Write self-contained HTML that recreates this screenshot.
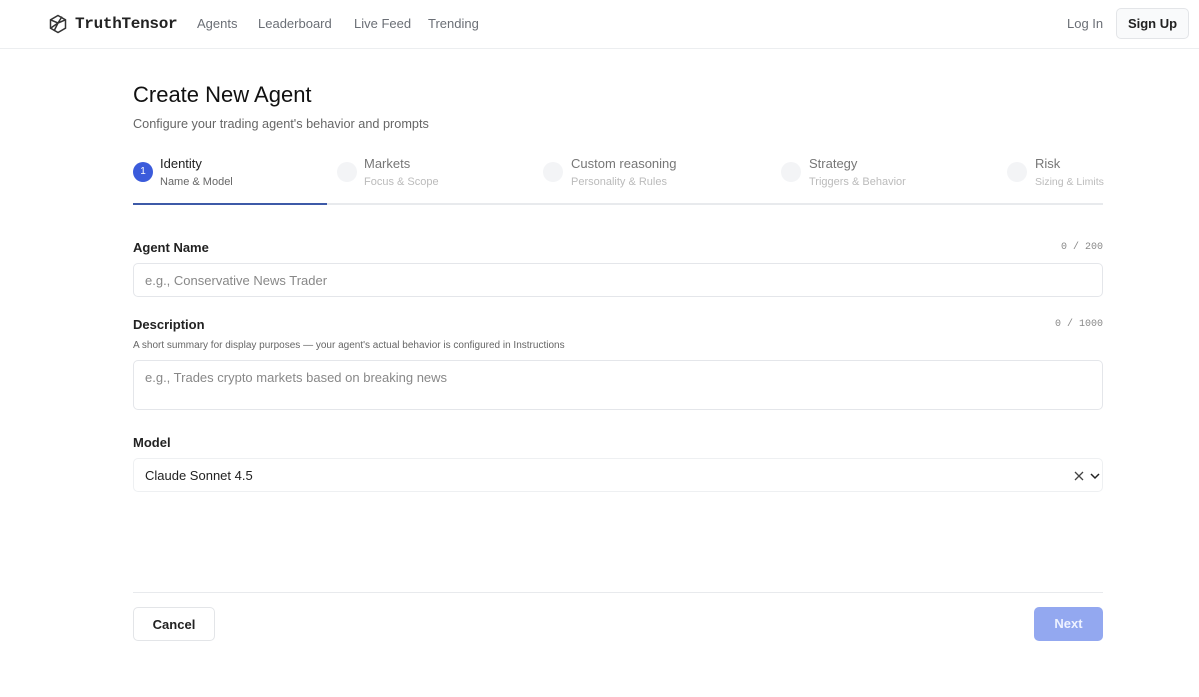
<!DOCTYPE html>
<html><head><meta charset="utf-8"><style>
*{box-sizing:border-box;margin:0;padding:0}
body{width:1199px;height:697px;background:#fff;font-family:"Liberation Sans",sans-serif;color:#111;position:relative;overflow:hidden}
.abs{position:absolute}
.nav{position:absolute;left:0;top:0;width:1199px;height:49px;border-bottom:1px solid #eceef0}
.navlink{position:absolute;top:16px;font-size:13px;color:#6b6f76}
.step .t{position:absolute;font-size:13px;color:#777}
.step .s{position:absolute;font-size:11px;color:#bbb}
.circ{position:absolute;width:20px;height:20px;border-radius:50%;background:#f3f4f6}
.label{position:absolute;left:133px;font-size:13px;font-weight:bold;color:#222}
.count{position:absolute;right:96px;font-family:"Liberation Mono",monospace;font-size:10px;color:#888}
.inp{position:absolute;left:133px;width:970px;border:1px solid #e4e6ea;border-radius:5px;font-size:13px;color:#888;padding-left:11px}
</style></head><body>
<div class="nav">
<svg class="abs" style="left:48px;top:14px" width="20" height="20" viewBox="0 0 20 20" fill="none" stroke="#333" stroke-width="1.5"><path d="M10 1.5 L17.5 5.8 V14.2 L10 18.5 L2.5 14.2 V5.8 Z"/><path d="M2.5 5.8 L10 9 L17.5 5.8 M10 9 L6 17 M10 9 L14 2.6 M2.5 14.2 L10 9"/></svg>
<div class="abs" style="left:75px;top:15px;font-family:'Liberation Mono',monospace;font-weight:bold;font-size:16px;color:#222;letter-spacing:-0.3px">TruthTensor</div>
<div class="navlink" style="left:197px">Agents</div>
<div class="navlink" style="left:258px">Leaderboard</div>
<div class="navlink" style="left:354px">Live Feed</div>
<div class="navlink" style="left:428px">Trending</div>
<div class="navlink" style="left:1067px">Log In</div>
<div class="abs" style="left:1116px;top:8px;width:73px;height:31px;border:1px solid #e3e5e8;border-radius:5px;background:#f9fafb;font-size:13px;font-weight:bold;color:#222;text-align:center;line-height:30px">Sign Up</div>
</div>
<div class="abs" style="left:133px;top:82px;font-size:22px;color:#111">Create New Agent</div>
<div class="abs" style="left:133px;top:117px;font-size:12.7px;color:#666">Configure your trading agent's behavior and prompts</div>
<div class="step">
<div class="circ" style="left:133px;top:162px;background:#3b5bdb;color:#fff;font-size:10px;text-align:center;line-height:20px">1</div>
<div class="t" style="left:160px;top:156px;color:#222">Identity</div><div class="s" style="left:160px;top:176px;color:#666">Name &amp; Model</div>
<div class="circ" style="left:337px;top:162px"></div>
<div class="t" style="left:364px;top:156px">Markets</div><div class="s" style="left:364px;top:176px">Focus &amp; Scope</div>
<div class="circ" style="left:543px;top:162px"></div>
<div class="t" style="left:571px;top:156px">Custom reasoning</div><div class="s" style="left:571px;top:176px">Personality &amp; Rules</div>
<div class="circ" style="left:781px;top:162px"></div>
<div class="t" style="left:809px;top:156px">Strategy</div><div class="s" style="left:809px;top:176px">Triggers &amp; Behavior</div>
<div class="circ" style="left:1007px;top:162px"></div>
<div class="t" style="left:1035px;top:156px">Risk</div><div class="s" style="left:1035px;top:176px;font-size:10.5px">Sizing &amp; Limits</div>
</div>
<div class="abs" style="left:133px;top:203px;width:970px;height:2px;background:#e8eaed"></div>
<div class="abs" style="left:133px;top:203px;width:194px;height:2px;background:#3d5aa8"></div>
<div class="label" style="top:240px">Agent Name</div><div class="count" style="top:242px">0 / 200</div>
<div class="inp" style="top:263px;height:34px;line-height:33px">e.g., Conservative News Trader</div>
<div class="label" style="top:317px">Description</div><div class="count" style="top:319px">0 / 1000</div>
<div class="abs" style="left:133px;top:340px;font-size:10px;color:#666">A short summary for display purposes — your agent's actual behavior is configured in Instructions</div>
<div class="inp" style="top:360px;height:50px;padding-top:9px">e.g., Trades crypto markets based on breaking news</div>
<div class="label" style="top:435px">Model</div>
<div class="inp" style="top:458px;height:34px;line-height:33px;color:#222;border-color:#eef0f2">Claude Sonnet 4.5
<svg class="abs" style="right:18px;top:12px" width="10" height="10" viewBox="0 0 10 10"><path d="M1 1 L9 9 M9 1 L1 9" stroke="#444" stroke-width="1.3"/></svg>
<svg class="abs" style="right:2px;top:13px" width="10" height="8" viewBox="0 0 10 8"><path d="M1 2 L5 6 L9 2" stroke="#222" stroke-width="1.5" fill="none"/></svg></div>
<div class="abs" style="left:133px;top:592px;width:970px;height:1px;background:#e8eaed"></div>
<div class="abs" style="left:133px;top:607px;width:82px;height:34px;border:1px solid #e3e5e8;border-radius:5px;font-size:13px;font-weight:bold;color:#222;text-align:center;line-height:33px">Cancel</div>
<div class="abs" style="left:1034px;top:607px;width:69px;height:34px;border-radius:5px;background:#93a8f0;font-size:13px;font-weight:bold;color:#eef2ff;text-align:center;line-height:34px">Next</div>
</body></html>
